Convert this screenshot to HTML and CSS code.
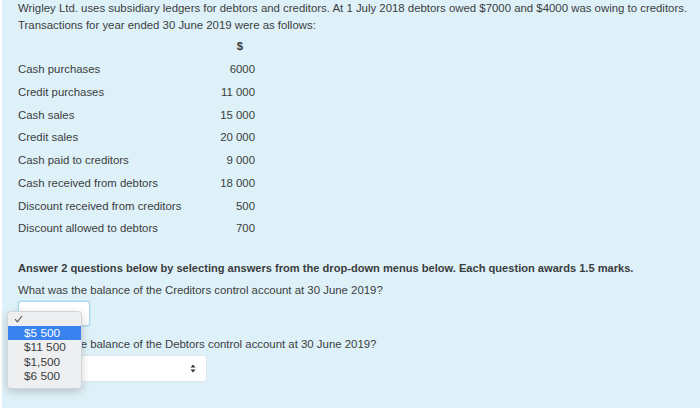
FILE: index.html
```html
<!DOCTYPE html>
<html>
<head>
<meta charset="utf-8">
<link rel="stylesheet" href="styles.css">
</head>
<body>
<div class="panel">
  <p class="intro">Wrigley Ltd. uses subsidiary ledgers for debtors and creditors. At 1 July 2018 debtors owed $7000 and $4000 was owing to creditors. Transactions for year ended 30 June 2019 were as follows:</p>
  <div class="ledger">
    <div class="row head"><span class="label"></span><span class="amt">$</span></div>
    <div class="row"><span class="label">Cash purchases</span><span class="amt">6000</span></div>
    <div class="row"><span class="label">Credit purchases</span><span class="amt">11 000</span></div>
    <div class="row"><span class="label">Cash sales</span><span class="amt">15 000</span></div>
    <div class="row"><span class="label">Credit sales</span><span class="amt">20 000</span></div>
    <div class="row"><span class="label">Cash paid to creditors</span><span class="amt">9 000</span></div>
    <div class="row"><span class="label">Cash received from debtors</span><span class="amt">18 000</span></div>
    <div class="row"><span class="label">Discount received from creditors</span><span class="amt">500</span></div>
    <div class="row"><span class="label">Discount allowed to debtors</span><span class="amt">700</span></div>
  </div>
  <p class="instr">Answer 2 questions below by selecting answers from the drop-down menus below. Each question awards 1.5 marks.</p>
  <div class="question">
    <p class="qtext">What was the balance of the Creditors control account at 30 June 2019?</p>
    <div class="select small focused"></div>
    <div class="menu">
      <div class="opt check"><svg width="9" height="8" viewBox="0 0 9 8"><path d="M1 4.2 L3.4 6.8 L8 1" fill="none" stroke="#555" stroke-width="1.1"/></svg></div>
      <div class="opt sel">$5 500</div>
      <div class="opt">$11 500</div>
      <div class="opt">$1,500</div>
      <div class="opt">$6 500</div>
    </div>
  </div>
  <div class="question q2">
    <p class="qtext">What was the balance of the Debtors control account at 30 June 2019?</p>
    <div class="select wide"><svg class="arrows" width="6" height="9" viewBox="0 0 6 9"><path d="M0.5 3.6 L3 0.6 L5.5 3.6 Z M0.5 5.4 L3 8.4 L5.5 5.4 Z" fill="#333"/></svg></div>
  </div>
</div>
</body>
</html>
```
FILE: styles.css
```css
html, body {
  margin: 0;
  padding: 0;
  background: #ffffff;
}
body {
  font-family: "Liberation Sans", Arial, sans-serif;
  font-size: 11.4px;
  color: #3a3d40;
}
.panel {
  margin-left: 2px;
  height: 408px;
  box-sizing: border-box;
  background: #dff1f8;
  padding: 0 6px 0 16px;
  position: relative;
}
p { margin: 0; }
.intro {
  line-height: 17px;
}
.ledger {
  margin-top: 1px;
  width: 237px;
}
.row {
  display: flex;
  justify-content: space-between;
  height: 22.75px;
  align-items: center;
}
.row.head .amt { font-weight: 700; padding-right: 12px; }
.amt { text-align: right; }
.instr {
  font-weight: 700;
  font-size: 11.1px;
  margin-top: 20px;
  line-height: 17px;
}
.question { position: relative; }
.qtext {
  margin-top: 5px;
  line-height: 17px;
}
.select {
  background: #fff;
  border: 1px solid #dde6ea;
  border-radius: 3px;
  box-sizing: border-box;
  display: flex;
  align-items: center;
  justify-content: flex-end;
}
.select.small {
  width: 72px;
  height: 25px;
  margin-top: 2px;
}
.select.focused {
  border-color: #a9d6ee;
  box-shadow: 0 0 0 1px #c7e6f5;
}
.q2 .qtext { margin-top: 10px; }
.select.wide {
  width: 189px;
  height: 27px;
  margin-top: 2px;
  padding-right: 10px;
}
.arrows { display: block; }
.menu {
  position: absolute;
  left: -11px;
  top: 29px;
  width: 73px;
  padding: 0 0 4px;
  background: #eeeff0;
  border: 1px solid #d3d6d8;
  border-radius: 4px;
  box-shadow: 0 3px 8px rgba(0,0,0,0.18);
  z-index: 2;
}
.opt {
  height: 14.5px;
  line-height: 14.5px;
  padding-left: 16px;
  color: #3a3d40;
  font-size: 11.8px;
}
.opt.check {
  padding-left: 6px;
  display: flex;
  align-items: center;
  height: 14px;
}
.opt.sel {
  background: #3a82f0;
  color: #fff;
}
```
